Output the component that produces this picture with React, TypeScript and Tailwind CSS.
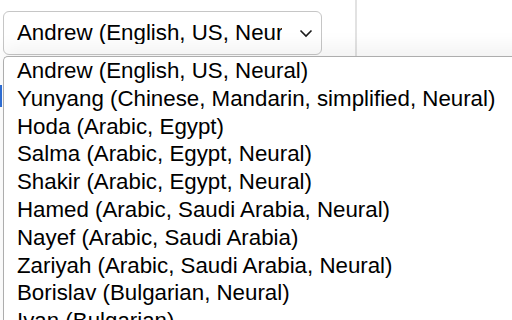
const voices = [
  "Andrew (English, US, Neural)",
  "Yunyang (Chinese, Mandarin, simplified, Neural)",
  "Hoda (Arabic, Egypt)",
  "Salma (Arabic, Egypt, Neural)",
  "Shakir (Arabic, Egypt, Neural)",
  "Hamed (Arabic, Saudi Arabia, Neural)",
  "Nayef (Arabic, Saudi Arabia)",
  "Zariyah (Arabic, Saudi Arabia, Neural)",
  "Borislav (Bulgarian, Neural)",
  "Ivan (Bulgarian)",
];

function Chevron() {
  return (
    <svg width="14" height="9" viewBox="0 0 14 9" fill="none" className="shrink-0">
      <path d="M1.5 1.5 L7 7 L12.5 1.5" stroke="#1a1a1a" strokeWidth="1.6" />
    </svg>
  );
}

export default function App() {
  return (
    <div className="relative h-[320px] w-[512px] overflow-hidden bg-white font-['Liberation_Sans',Arial,sans-serif] text-black">
      <div className="flex h-[57px]">
        <div className="w-[355px] pl-[3px] pt-[11px]">
          <div className="flex h-[44px] w-[319px] items-center rounded-[6px] border border-[#c6c6c6] bg-white pl-[13px] pr-[8px]">
            <div className="w-[267px] overflow-hidden whitespace-nowrap text-[22.3px] leading-none">
              {voices[0]}
            </div>
            <div className="ml-[17px] flex items-center">
              <Chevron />
            </div>
          </div>
        </div>
        <div className="w-[2px] bg-[#e2e2e2]" />
        <div className="flex-1" />
      </div>

      <div className="absolute left-0 top-[85px] h-[22px] w-[2px] bg-[#2f6fd6]" />

      <div className="absolute left-[3px] top-[56px] w-[540px] rounded-tl-[5px] border-l border-t border-[#adadad] bg-white shadow-[0_-10px_18px_rgba(0,0,0,0.05)]">
        {voices.map((voice) => (
          <div
            key={voice}
            className="whitespace-nowrap pl-[13px] text-[22.3px] leading-[27.8px]"
          >
            {voice}
          </div>
        ))}
      </div>
    </div>
  );
}
